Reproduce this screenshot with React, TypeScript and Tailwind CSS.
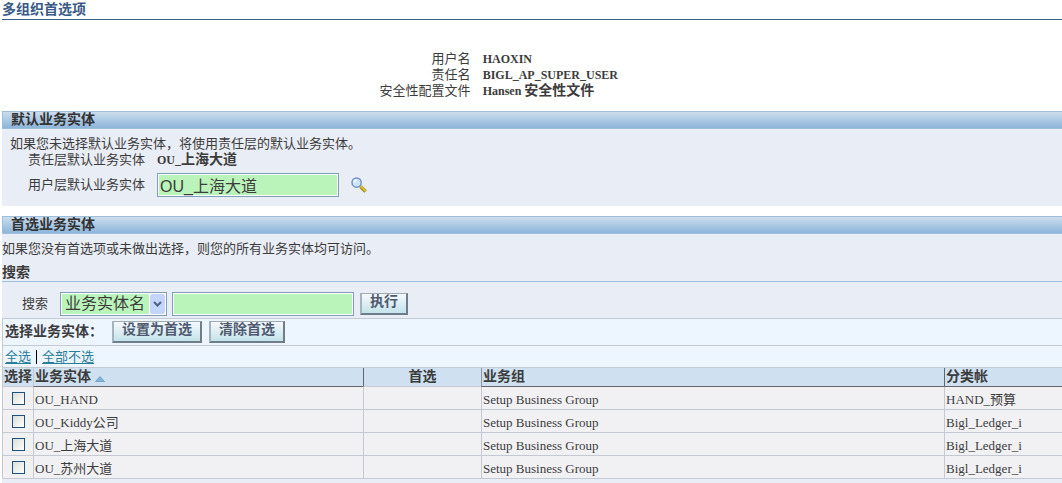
import type { ReactNode } from 'react'

interface Entity {
  id: string
  name: string
  group: string
  ledger: string
}

const ENTITIES: Entity[] = [
  { id: 'hand', name: 'OU_HAND', group: 'Setup Business Group', ledger: 'HAND_预算' },
  { id: 'kiddy', name: 'OU_Kiddy公司', group: 'Setup Business Group', ledger: 'Bigl_Ledger_i' },
  { id: 'shanghai', name: 'OU_上海大道', group: 'Setup Business Group', ledger: 'Bigl_Ledger_i' },
  { id: 'suzhou', name: 'OU_苏州大道', group: 'Setup Business Group', ledger: 'Bigl_Ledger_i' },
]

function SectionBar({ children }: { children: ReactNode }) {
  return (
    <h2 className="h-[18px] border border-r-0 border-[#9dbdd9] bg-linear-to-b from-[#cbdded] to-[#8db5da] pl-2 text-[14px] leading-4 font-bold text-[#333333]">
      {children}
    </h2>
  )
}

function ActionButton({ children }: { children: ReactNode }) {
  return (
    <button
      type="button"
      className="h-[22px] border-t border-r-2 border-b-2 border-l-2 border-t-[#9fabb5] border-r-[#6f7d8a] border-b-[#6f7d8a] border-l-[#a5b3bd] bg-linear-to-b from-[#f6f9fd] to-[#c3e3ea] px-2 pb-[3px] text-[14px] leading-4 font-bold text-[#4f5a70]"
    >
      {children}
    </button>
  )
}

function SearchIcon() {
  return (
    <svg viewBox="0 0 16 16" className="h-4 w-4">
      <path d="M9.5 9.5l5 5" stroke="#a18a1c" strokeWidth="3.6" />
      <path d="M9.5 9l5 5" stroke="#d9bd2e" strokeWidth="2" />
      <circle cx="5.6" cy="5.6" r="4.6" fill="#cfe5fb" stroke="#6c8fc4" strokeWidth="1.4" />
      <path d="M3 5.5a2.5 2.5 0 0 1 2.5-2.5" fill="none" stroke="#ffffff" strokeWidth="1.4" />
    </svg>
  )
}

export default function App() {
  return (
    <div className="pl-[2px] font-['Liberation_Serif','Noto_Sans_CJK_SC',serif] text-[13px] leading-4 text-[#3c3c3c]">
      <h1 className="h-5 border-b border-[#3a5a87] pt-[2px] text-[14px] leading-4 font-bold text-[#3a5a87]">
        多组织首选项
      </h1>

      {/* Current user */}
      <dl className="grid grid-cols-[44%_1fr] gap-x-3 pt-[31px] pb-3 pl-1">
        <dt className="text-right">用户名</dt>
        <dd className="text-[12px] leading-4 font-bold">HAOXIN</dd>
        <dt className="text-right">责任名</dt>
        <dd className="text-[12px] leading-4 font-bold">BIGL_AP_SUPER_USER</dd>
        <dt className="text-right">安全性配置文件</dt>
        <dd className="text-[12px] leading-4 font-bold">
          Hansen <span className="text-[14px] leading-4">安全性文件</span>
        </dd>
      </dl>

      {/* Default entity */}
      <section className="mb-[10px] bg-[#e9edf5] pb-[9px]">
        <SectionBar>默认业务实体</SectionBar>
        <p className="pt-[7px] pl-2">如果您未选择默认业务实体，将使用责任层的默认业务实体。</p>
        <div className="flex gap-3 pl-[26px]">
          <span>责任层默认业务实体</span>
          <span className="text-[12px] leading-4 font-bold">
            OU_<span className="text-[14px] leading-4">上海大道</span>
          </span>
        </div>
        <div className="mt-[5px] flex items-center gap-3 pl-[26px]">
          <label htmlFor="defaultEntity">用户层默认业务实体</label>
          <input
            id="defaultEntity"
            type="text"
            defaultValue="OU_上海大道"
            className="h-6 w-[182px] border border-[#7f9db9] bg-[#baf4ba] px-[2px] font-['Liberation_Sans','Noto_Sans_CJK_SC',sans-serif] text-[16px] leading-5 shadow-[inset_0_0_0_1px_white]"
          />
          <button type="button" aria-label="搜索">
            <SearchIcon />
          </button>
        </div>
      </section>

      {/* Preferred entities */}
      <section className="bg-[#e9edf5] pb-1">
        <SectionBar>首选业务实体</SectionBar>
        <p className="pt-[7px]">如果您没有首选项或未做出选择，则您的所有业务实体均可访问。</p>
        <h3 className="mt-2 border-b border-[#9dc0dc] text-[14px] leading-4 font-bold">搜索</h3>

        <div className="flex items-center pt-[10px] pb-[2px] pl-5">
          <label htmlFor="searchBy" className="mr-3">
            搜索
          </label>
          <div className="relative mr-[5px] w-[107px]">
            <select
              id="searchBy"
              className="h-6 w-full appearance-none border border-[#7f9db9] bg-[#baf4ba] pl-1 font-['Liberation_Sans','Noto_Sans_CJK_SC',sans-serif] text-[16px] leading-5 shadow-[inset_0_0_0_1px_white]"
            >
              <option>业务实体名</option>
            </select>
            <svg viewBox="0 0 17 20" className="pointer-events-none absolute top-[2px] right-[1px] h-5 w-[17px]">
              <rect width="17" height="20" fill="#ffffff" />
              <rect x="1" width="15" height="20" rx="2" fill="#c4d5fb" />
              <path d="M5 8l3.5 3.5L12 8" fill="none" stroke="#4d6185" strokeWidth="2" />
            </svg>
          </div>
          <input
            type="text"
            aria-label="业务实体名"
            className="mr-[6px] h-6 w-[182px] border border-[#7f9db9] bg-[#baf4ba] px-[2px] text-[16px] shadow-[inset_0_0_0_1px_white]"
          />
          <ActionButton>执行</ActionButton>
        </div>

        <div className="flex h-[27px] items-center border-t border-l border-[#c5c9d3] bg-[#edf5ff] pl-[2px]">
          <span className="mr-[9px] text-[14px] leading-4 font-bold">选择业务实体：</span>
          <div className="flex gap-[7px]">
            <ActionButton>设置为首选</ActionButton>
            <ActionButton>清除首选</ActionButton>
          </div>
        </div>

        <div className="flex h-[22px] items-center border-t border-l border-[#c5c9d3] bg-[#edf5ff] pl-[2px]">
          <a href="#all" className="text-[#2b7d98] underline underline-offset-2">
            全选
          </a>
          <span className="mx-[5px] h-[14px] w-px bg-black" />
          <a href="#none" className="text-[#2b7d98] underline underline-offset-2">
            全部不选
          </a>
        </div>

        <table className="w-full table-fixed border-separate border-spacing-0 border-t border-[#c5c9d3]">
          <colgroup>
            <col className="w-[31px]" />
            <col className="w-[330px]" />
            <col className="w-[118px]" />
            <col />
            <col className="w-[118px]" />
          </colgroup>
          <thead className="bg-[#cfe1f0] text-left text-[14px] leading-4">
            <tr className="h-[19px]">
              <th className="border-b border-l border-[#c5c9d3] p-0 text-center whitespace-nowrap">选择</th>
              <th className="border-b border-l border-b-[#63676d] border-l-[#c5c9d3] p-0 pl-px">
                <div className="flex items-center gap-1">
                  业务实体
                  <svg viewBox="0 0 10 6" className="mt-1 h-[6px] w-[10px]">
                    <path d="M5 0.5l4.5 5h-9z" fill="#86b3d8" stroke="#5d94c2" strokeWidth="0.7" />
                  </svg>
                </div>
              </th>
              <th className="border-b border-l border-b-[#c5c9d3] border-l-[#63676d] p-0 text-center">首选</th>
              <th className="border-b border-l border-b-[#63676d] border-l-[#9296a0] p-0 pl-px">业务组</th>
              <th className="border-b border-l border-[#63676d] p-0 pl-px">分类帐</th>
            </tr>
          </thead>
          <tbody className="bg-[#f1f1f4]">
            {ENTITIES.map((entity) => (
              <tr key={entity.id} className="h-[23px]">
                <td className="border-b border-l border-[#c5c9d3] p-0">
                  <input
                    type="checkbox"
                    aria-label={entity.name}
                    className="mx-auto block h-[13px] w-[13px] appearance-none border border-[#1c5180] bg-linear-to-br from-[#dcdcd7] to-white"
                  />
                </td>
                <td className="border-b border-l border-[#c5c9d3] p-0 pt-1 pl-px">{entity.name}</td>
                <td className="border-b border-l border-[#c5c9d3] p-0" />
                <td className="border-b border-l border-[#c5c9d3] p-0 pt-1 pl-px">{entity.group}</td>
                <td className="border-b border-l border-[#c5c9d3] p-0 pt-1 pl-px">{entity.ledger}</td>
              </tr>
            ))}
          </tbody>
        </table>
      </section>
    </div>
  )
}
